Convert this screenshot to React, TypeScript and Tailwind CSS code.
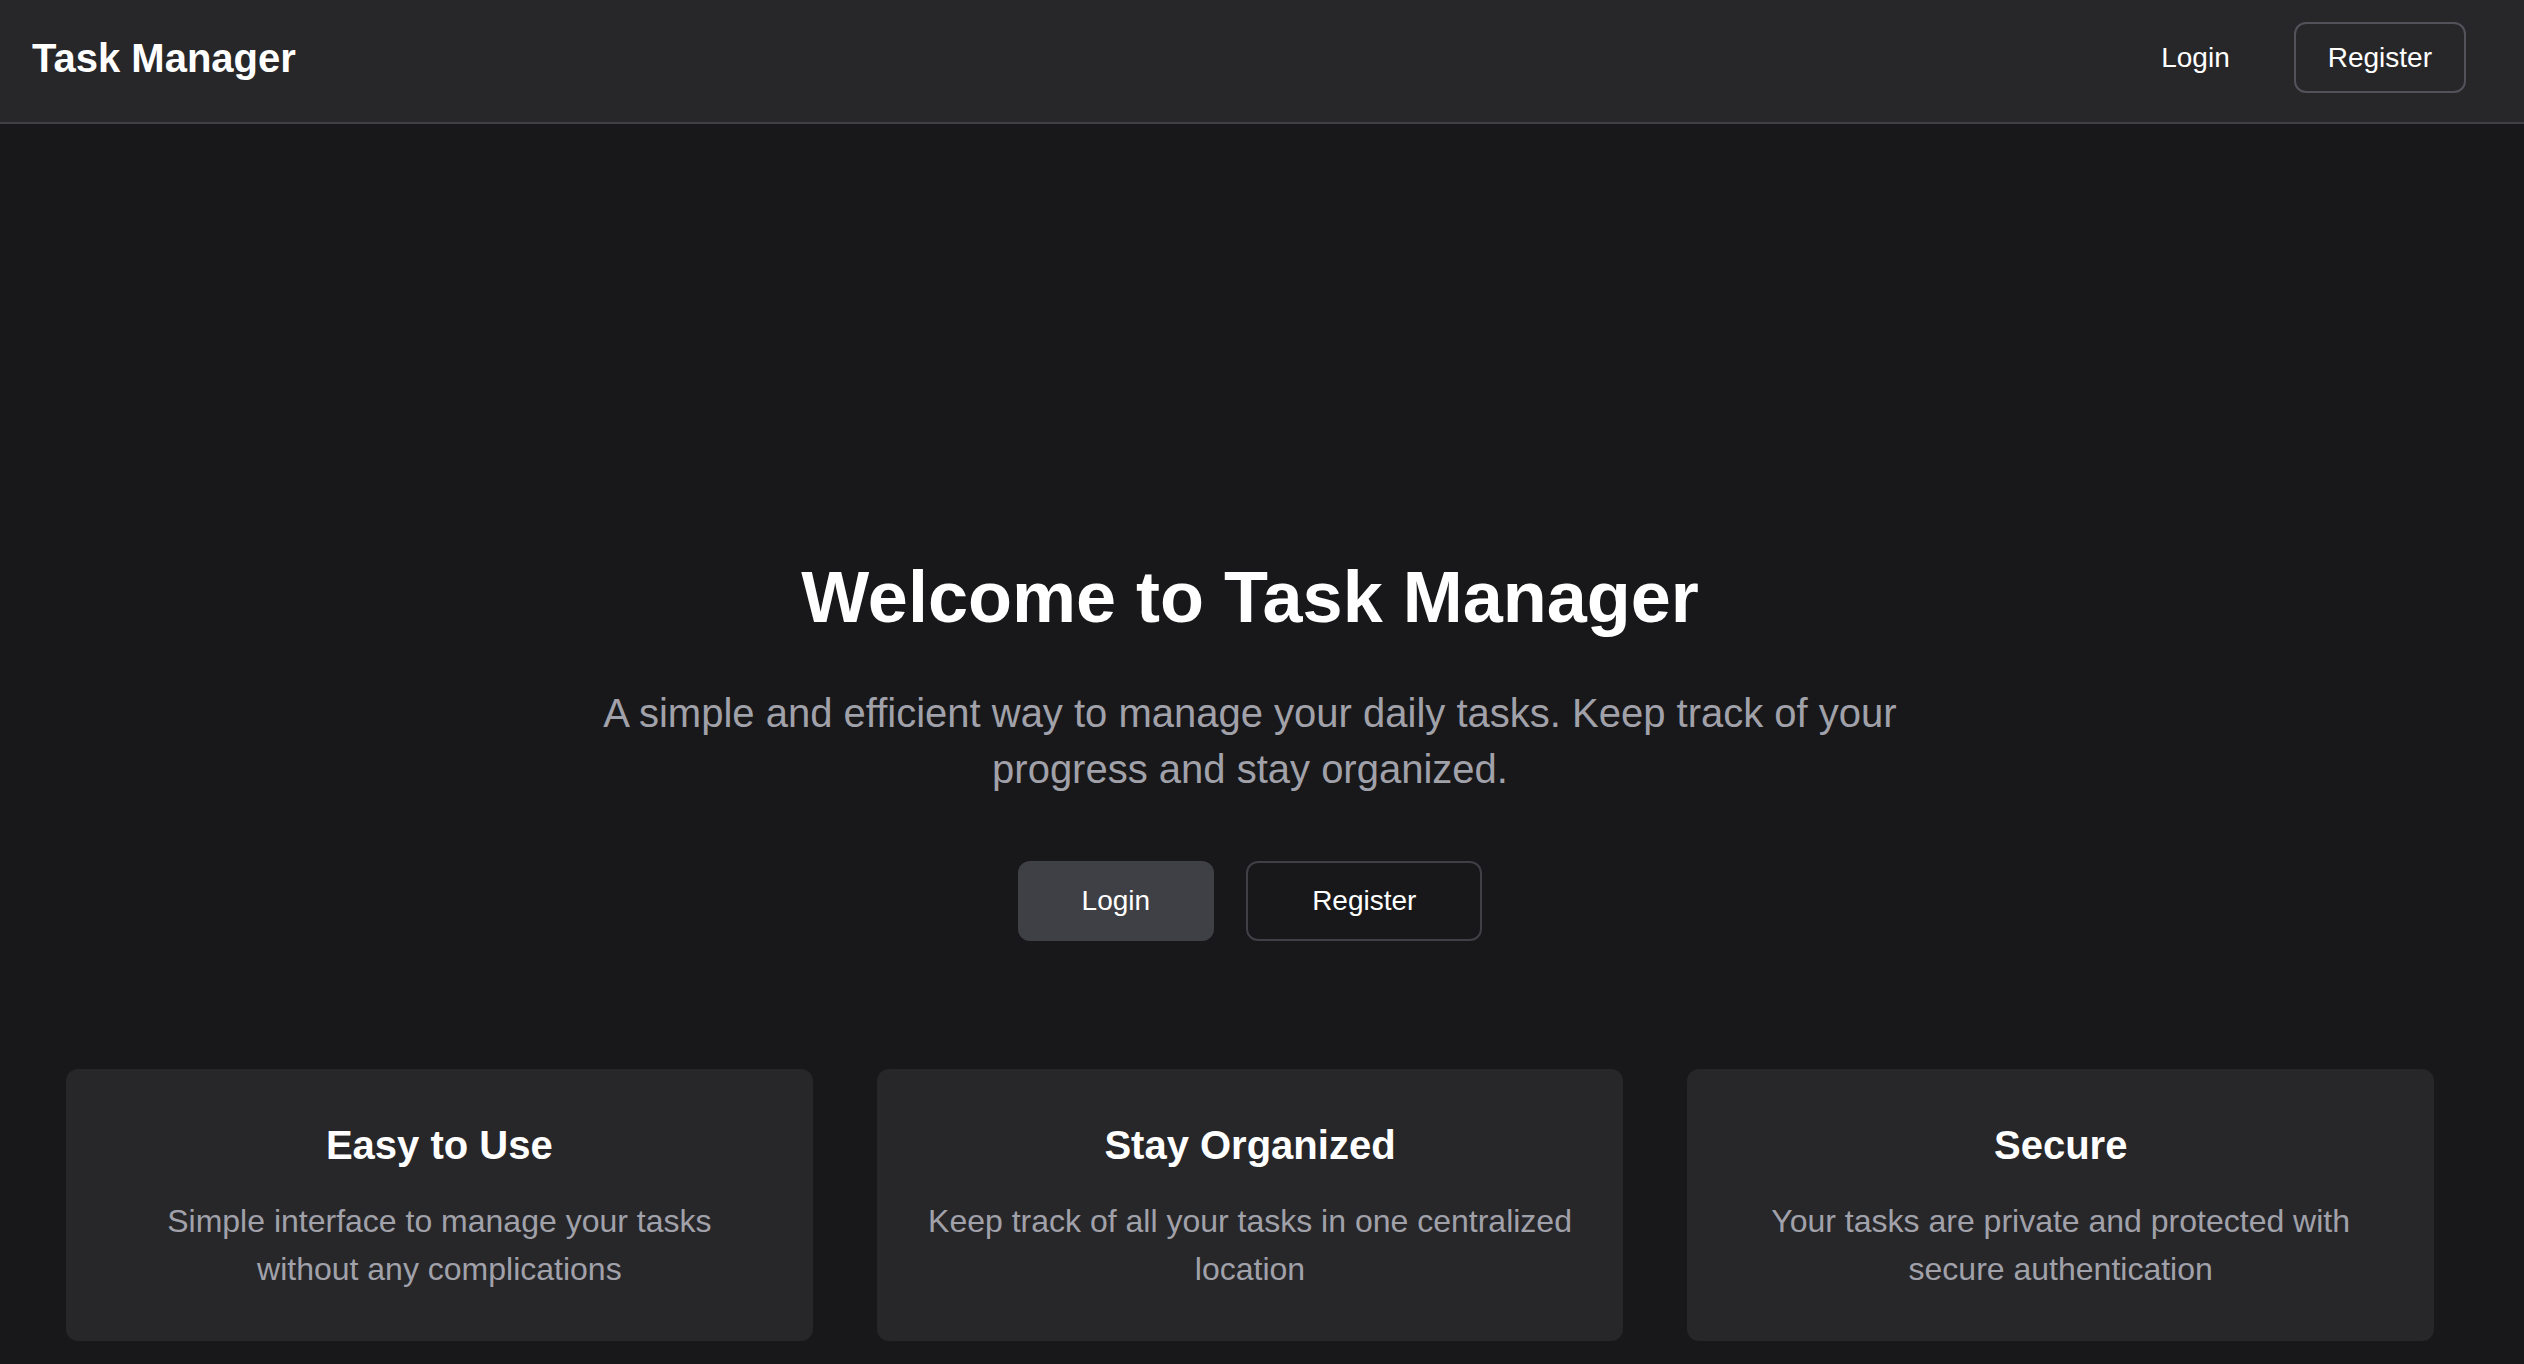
import React from 'react';

const features = [
  {
    title: 'Easy to Use',
    text: 'Simple interface to manage your tasks without any complications',
  },
  {
    title: 'Stay Organized',
    text: 'Keep track of all your tasks in one centralized location',
  },
  {
    title: 'Secure',
    text: 'Your tasks are private and protected with secure authentication',
  },
];

const App: React.FC = () => {
  return (
    <div className="min-h-screen bg-[#18181b] text-white font-['Liberation_Sans',Arial,sans-serif]">
      {/* Header */}
      <header className="flex items-center justify-between bg-[#27272a] border-b-2 border-[#3f3f46] pl-[32px] pr-[58px] pt-[22px] pb-[29px]">
        <h1 className="text-[40px] leading-[56px] font-bold">Task Manager</h1>
        <nav className="flex items-center gap-[32px]">
          <button className="h-[71px] px-[32px] text-[28px] text-white">Login</button>
          <button className="h-[71px] px-[32px] text-[28px] text-white border-2 border-[#52525b] rounded-[12px]">
            Register
          </button>
        </nav>
      </header>

      <main className="pb-[48px]">
        {/* Hero */}
        <section className="flex flex-col items-center text-center pt-[433px] pr-[24px]">
          <h2 className="text-[72px] leading-[80px] font-bold mb-[48px]">Welcome to Task Manager</h2>
          <p className="max-w-[1344px] text-[40px] leading-[56px] text-[#a1a1aa] mb-[64px]">
            A simple and efficient way to manage your daily tasks. Keep track of your progress and stay organized.
          </p>
          <div className="flex gap-[32px]">
            <button className="h-[80px] px-[64px] rounded-[12px] bg-[#3f3f46] text-[28px] text-white">Login</button>
            <button className="h-[80px] px-[64px] rounded-[12px] border-2 border-[#3f3f46] text-[28px] text-white">
              Register
            </button>
          </div>
        </section>

        {/* Features */}
        <section className="grid grid-cols-3 gap-[64px] pl-[66px] pr-[90px] mt-[128px]">
          {features.map((f) => (
            <div key={f.title} className="bg-[#27272a] rounded-[12px] p-[48px] text-center">
              <h3 className="text-[40px] leading-[56px] font-bold mb-[24px]">{f.title}</h3>
              <p className="text-[32px] leading-[48px] text-[#a1a1aa]">{f.text}</p>
            </div>
          ))}
        </section>
      </main>
    </div>
  );
};

export default App;
